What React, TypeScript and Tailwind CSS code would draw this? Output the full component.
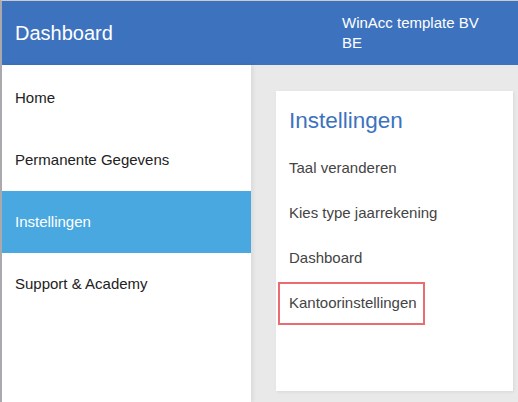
import React from 'react';

const menu = ['Home', 'Permanente Gegevens', 'Instellingen', 'Support & Academy'];
const settings = ['Taal veranderen', 'Kies type jaarrekening', 'Dashboard', 'Kantoorinstellingen'];

export default function App() {
  return (
    <div
      className="w-[518px] h-[402px] overflow-hidden flex flex-col border-t border-t-[#cacaca] border-l-2 border-l-[#a9a9ae] bg-[#e9e9e9]"
      style={{ fontFamily: '"Liberation Sans", Arial, sans-serif' }}
    >
      <header className="h-[64px] shrink-0 flex bg-[#3d72bf] text-white">
        <div className="w-[249px] flex items-center pl-[13px] text-[20px]">Dashboard</div>
        <div className="flex items-center pl-[91px]">
          <div className="w-[150px] text-[15px] leading-[20px]">WinAcc template BV BE</div>
        </div>
      </header>

      <div className="flex flex-1 min-h-0">
        <nav className="w-[249px] shrink-0 bg-white relative z-10 pt-[2px] shadow-[2px_0_4px_rgba(0,0,0,0.07)]">
          {menu.map((item) => (
            <div
              key={item}
              className={
                item === 'Instellingen'
                  ? 'h-[62px] flex items-center pl-[13px] text-[15px] bg-[#49a8e0] text-white'
                  : 'h-[62px] flex items-center pl-[13px] text-[15px] text-[#222]'
              }
            >
              {item}
            </div>
          ))}
        </nav>

        <main className="flex-1 pt-[26px] pl-[25px] pr-[5px] pb-[11px]">
          <div className="h-full bg-white shadow-[1px_1px_3px_rgba(0,0,0,0.08)] pt-[19px]">
            <h2 className="pl-[13px] text-[22.5px] leading-[22px] text-[#3d72bf] mb-[14px]">Instellingen</h2>
            {settings.map((item) => (
              <div key={item} className="h-[45px] flex items-center pl-[2px]">
                <span
                  className={
                    item === 'Kantoorinstellingen'
                      ? 'h-[43px] flex items-center pl-[9px] pr-[6px] border-2 border-[#e86c70] text-[15px] text-[#444]'
                      : 'h-[43px] flex items-center pl-[9px] pr-[6px] border-2 border-transparent text-[15px] text-[#444]'
                  }
                >
                  {item}
                </span>
              </div>
            ))}
          </div>
        </main>
      </div>
    </div>
  );
}
